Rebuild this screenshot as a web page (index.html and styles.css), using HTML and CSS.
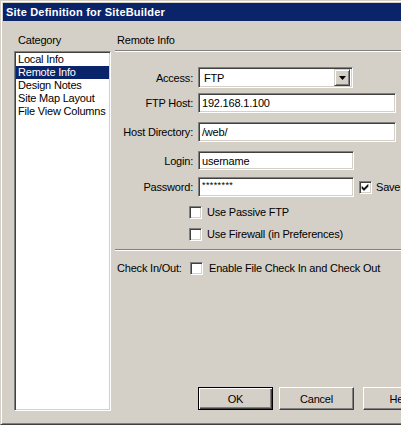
FILE: index.html
```html
<!DOCTYPE html>
<html>
<head>
	<meta charset="utf-8" />
	<title>Site Definition for SiteBuilder</title>
	<link rel="stylesheet" href="styles.css">
</head>
<body>
	<div class="window">
		<div class="titlebar">Site Definition for SiteBuilder</div>
		<div class="dialog">
			<div class="category">
				<div class="caption">Category</div>
				<ul class="listbox">
					<li>Local Info</li>
					<li class="selected">Remote Info</li>
					<li>Design Notes</li>
					<li>Site Map Layout</li>
					<li>File View Columns</li>
				</ul>
			</div>
			<div class="panel">
				<div class="caption heading">Remote Info</div>
				<div class="etched"></div>

				<div class="row r-access">
					<span class="label">Access:</span>
					<div class="combo">
						<span class="value">FTP</span>
						<span class="drop"><svg width="7" height="4" viewBox="0 0 7 4"><path d="M0 0h7L3.5 4z" fill="#000"/></svg></span>
					</div>
				</div>
				<div class="row r-host">
					<span class="label">FTP Host:</span>
					<div class="field wide">192.168.1.100</div>
				</div>
				<div class="row r-dir">
					<span class="label">Host Directory:</span>
					<div class="field wide">/web/</div>
				</div>
				<div class="row r-login">
					<span class="label">Login:</span>
					<div class="field">username</div>
				</div>
				<div class="row r-pass">
					<span class="label">Password:</span>
					<div class="field secret">********</div>
					<span class="check checked"><svg width="9" height="9" viewBox="0 0 9 9"><path d="M1 3.5l2 2 4-4v2l-4 4-2-2z" fill="#000" stroke="#000" stroke-width="0.6"/></svg></span>
					<span class="save-text">Save</span>
				</div>

				<div class="opt r-passive"><span class="check"></span><span>Use Passive FTP</span></div>
				<div class="opt r-firewall"><span class="check"></span><span>Use Firewall (in Preferences)</span></div>

				<div class="etched r-sep"></div>

				<div class="checkin">
					<span class="checkin-label">Check In/Out:</span>
					<span class="check"></span>
					<span class="checkin-text">Enable File Check In and Check Out</span>
				</div>

				<div class="buttons">
					<button class="btn default">OK</button>
					<button class="btn">Cancel</button>
					<button class="btn help">Help</button>
				</div>
			</div>
		</div>
	</div>
</body>
</html>
```

FILE: styles.css
```css
* { margin:0; padding:0; box-sizing:border-box; }
html, body { overflow:hidden; }
body { background:#d4d0c8; font-family:"Liberation Sans", Arial, sans-serif; font-size:11px; letter-spacing:-0.2px; color:#000; }

/* window frame */
.window { width:460px; height:425px; padding:2px; background:#d4d0c8;
	border:1px solid; border-color:#d4d0c8 #404040 #404040 #d4d0c8;
	box-shadow:inset 1px 1px 0 #fff, inset -1px -1px 0 #808080; }
.titlebar { height:18px; line-height:18px; padding-left:3px; background:#0a246a; color:#fff; font-weight:bold; letter-spacing:0.2px; }

.dialog { display:flex; gap:4px; margin-left:11px; }
.caption { margin-top:13px; height:13px; line-height:13px; padding-left:4px; }
.heading { padding-left:2px; }

/* category list */
.category { width:97px; flex:none; }
.listbox { list-style:none; margin-top:4px; width:97px; height:360px; background:#fff;
	border:1px solid; border-color:#808080 #fff #fff #808080;
	box-shadow:inset 1px 1px 0 #404040, inset -1px -1px 0 #d4d0c8; padding:1px; }
.listbox li { height:13px; line-height:13px; padding-left:2px; white-space:nowrap; }
.listbox li.selected { background:#0a246a; color:#fff; }

.panel { flex:1; }
.etched { margin-top:3px; height:2px; border-top:1px solid #808080; border-bottom:1px solid #fff; }

/* form rows */
.row { display:flex; align-items:center; height:20px; }
.row .label { width:78px; margin-right:5px; text-align:right; white-space:nowrap; }
.r-access { height:21px; margin-top:15px; }
.r-host { margin-top:5px; }
.r-dir { margin-top:9px; }
.r-login { margin-top:9px; height:19px; }
.r-pass { margin-top:7px; }

.field, .combo { height:100%; background:#fff; border:1px solid; border-color:#808080 #fff #fff #808080;
	box-shadow:inset 1px 1px 0 #404040, inset -1px -1px 0 #d4d0c8; }
.field { width:156px; padding-left:3px; display:flex; align-items:center; white-space:nowrap; }
.field.wide { width:198px; }
.field.secret { align-items:flex-start; padding-top:3px; font-size:9px; line-height:9px; letter-spacing:0.4px; }

.combo { width:155px; display:flex; align-items:center; padding:2px; }
.combo .value { flex:1; padding-left:3px; }
.drop { width:16px; height:17px; display:flex; align-items:center; justify-content:center; background:#d4d0c8;
	border:1px solid; border-color:#d4d0c8 #404040 #404040 #d4d0c8;
	box-shadow:inset 1px 1px 0 #fff, inset -1px -1px 0 #808080; }

/* checkboxes */
.check { width:13px; height:13px; flex:none; background:#fff; display:flex; align-items:center; justify-content:center;
	border:1px solid; border-color:#808080 #fff #fff #808080;
	box-shadow:inset 1px 1px 0 #404040, inset -1px -1px 0 #d4d0c8; }
.r-pass .check { margin-left:5px; }
.save-text { margin-left:4px; }

.opt { display:flex; align-items:center; gap:5px; height:13px; line-height:13px; margin-left:74px; }
.r-passive { margin-top:9px; }
.r-firewall { margin-top:9px; }
.r-sep { margin-top:8px; }

.checkin { display:flex; align-items:center; height:13px; line-height:13px; margin-top:11px; }
.checkin-label { width:75px; padding-left:2px; }
.checkin-text { margin-left:6px; }

/* dialog buttons */
.buttons { display:flex; margin-top:112px; margin-left:83px; }
.btn { width:75px; height:23px; flex:none; font:inherit; letter-spacing:inherit; color:#000; background:#d4d0c8; text-align:center;
	border:1px solid; border-color:#fff #404040 #404040 #fff;
	box-shadow:inset -1px -1px 0 #808080; }
.btn.default { border-color:#000; box-shadow:inset 1px 1px 0 #fff, inset -1px -1px 0 #404040, inset -2px -2px 0 #808080; }
.btn + .btn { margin-left:6px; }
.btn.help { margin-left:9px; }
```
